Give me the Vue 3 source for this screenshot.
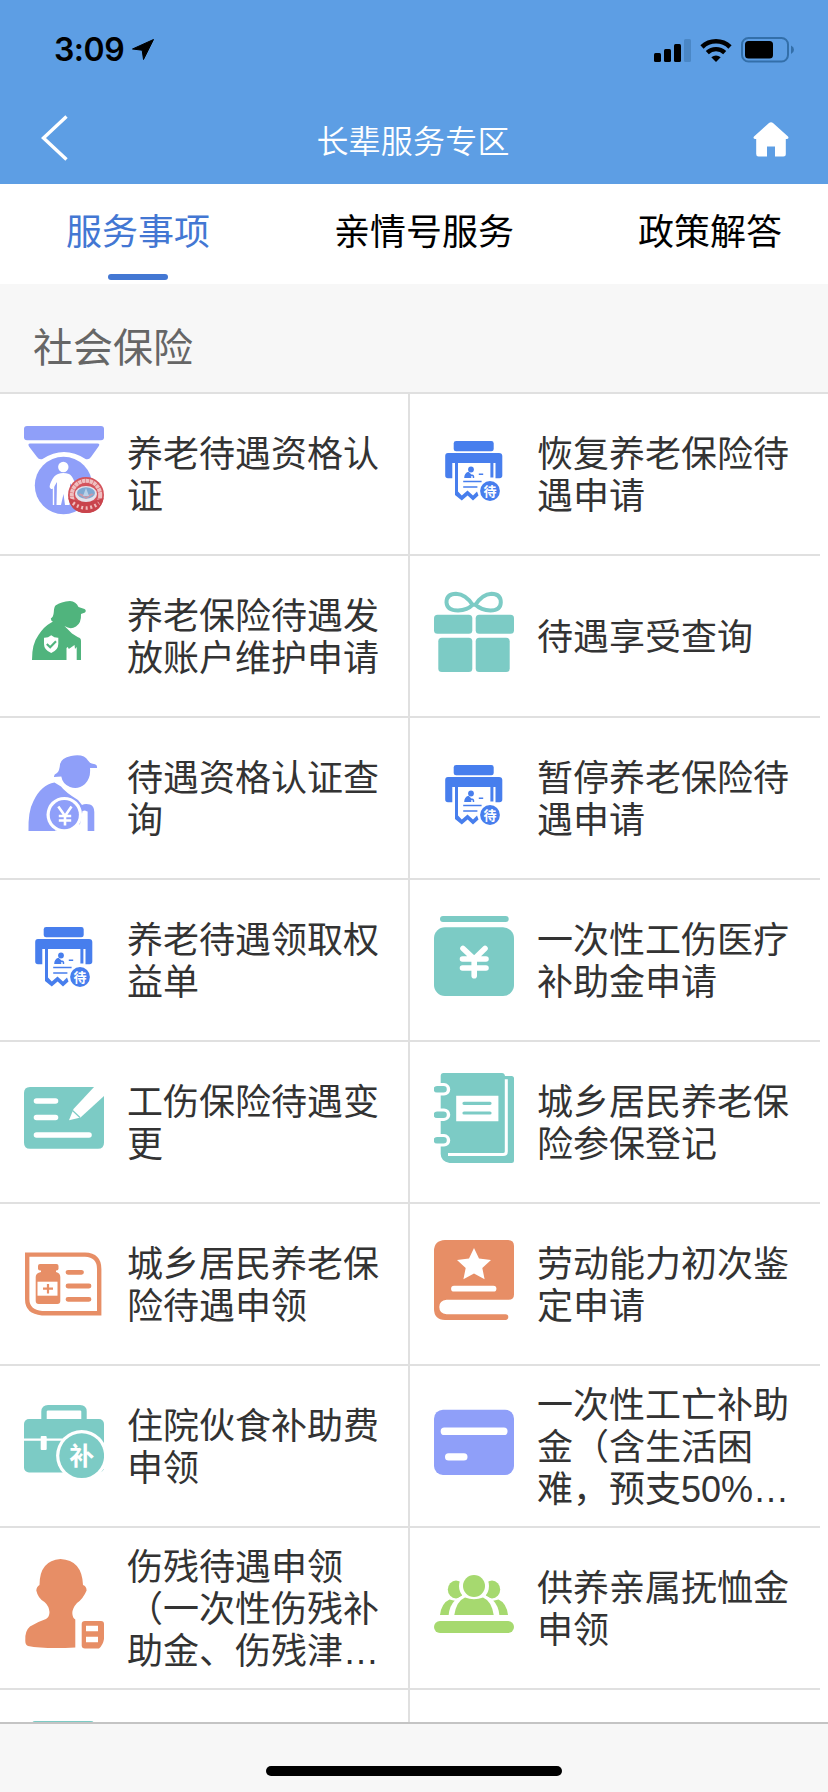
<template>
  <div class="page">
    <header class="header">
      <div class="status-bar">
        <div class="status-left">
          <span class="time">3:09</span>
          <svg class="location" viewBox="0 0 22 21">
            <path d="M21.5 0.5L11.5 20.5L10.2 11.2L0.5 10Z" fill="#000" stroke="#000" stroke-linejoin="round" />
          </svg>
        </div>
        <div class="status-right">
          <svg class="signal" viewBox="0 0 37 24">
            <rect x="0" y="15" width="7" height="9" rx="1.5" />
            <rect x="10" y="11" width="7" height="13" rx="1.5" />
            <rect x="20" y="6" width="7" height="18" rx="1.5" />
            <rect x="30" y="1" width="7" height="23" rx="1.5" fill="#4a87c6" />
          </svg>
          <svg class="wifi" viewBox="0 0 32 24">
            <path d="M2 9A20 20 0 0 1 30 9" fill="none" stroke="#000" stroke-width="4.6" />
            <path d="M7.3 14.6A12.6 12.6 0 0 1 24.7 14.6" fill="none" stroke="#000" stroke-width="4.4" />
            <path d="M11.3 19.2Q16 15.6 20.7 19.2L16 24Z" />
          </svg>
          <svg class="battery" viewBox="0 0 54 26">
            <rect x="1" y="1" width="46" height="23.5" rx="6.5" fill="none" stroke="#336fa9" stroke-width="2" />
            <rect x="4" y="4" width="28" height="17.5" rx="3.5" />
            <path d="M50 8.5Q53 10 53 12.8T50 17Z" fill="#336fa9" />
          </svg>
        </div>
      </div>
      <div class="nav-bar">
        <svg class="back" viewBox="0 0 28 46">
          <path d="M25.5 1.5L2.5 23L25.5 44.5" fill="none" stroke="#fff" stroke-width="3.4" />
        </svg>
        <h1>长辈服务专区</h1>
        <svg class="home" viewBox="0 0 36 35">
          <path d="M16 1Q18 -0.6 20 1L35 14.5Q36.4 16.6 34 17H32.8V32Q32.8 34.5 30.3 34.5H22V24.5H14V34.5H5.5Q3.2 34.5 3.2 32V17H2Q-0.4 16.6 1 14.5Z" fill="#fff" />
        </svg>
      </div>
    </header>

    <nav class="tabs">
      <div
        v-for="(tab, index) in tabs"
        :key="tab"
        class="tab"
        :class="{ active: index === activeTab }"
        @click="activeTab = index"
      >
        {{ tab }}
      </div>
    </nav>

    <h2 class="section-title">社会保险</h2>

    <main class="services">
      <div v-for="item in services" :key="item.title" class="service">
        <svg class="icon" viewBox="0 0 80 90">
          <!-- медаль -->
          <g v-if="item.icon === 'medal'" fill="#8f9ff9">
            <rect x="0" y="1" width="80" height="14.3" rx="3" />
            <path d="M6 18.5H73.5Q76.5 18.5 74.5 21.5L67 32Q65 35 61.5 34Q40 20 18.5 34Q15 35 13 32L5 21.5Q3.5 18.5 6 18.5Z" />
            <circle cx="39.5" cy="60.5" r="32" fill="#fff" />
            <circle cx="39.5" cy="60.5" r="28.7" />
            <circle cx="39.3" cy="42" r="5.2" fill="#fff" />
            <path d="M34 49Q39 47 45 49Q48 50 51 58L53 66H50L46 58V67L45.5 80H41L39.5 69L37 80H32.5L33 57L30 62Q29 65 26.5 63.5Q24.5 62 27 57Q30 50 34 49Z" fill="#fff" />
            <path d="M29.5 61V80" stroke="#fff" stroke-width="1.4" />
            <circle cx="62" cy="70" r="18" fill="#d4545c" />
            <circle cx="62" cy="70" r="14.2" fill="none" stroke="#efbfc0" stroke-width="4" stroke-dasharray="3.4 0.5" />
            <path d="M44.5 73Q62 80 79.5 73Q77 88 62 88T44.5 73Z" fill="#c9444c" />
            <path d="M49 78Q62 88 75 78" fill="none" stroke="#f0bcbc" stroke-width="3.5" stroke-dasharray="2 2.6" />
            <ellipse cx="62" cy="69" rx="11" ry="8" fill="#e6e3ea" />
            <ellipse cx="62" cy="68" rx="9" ry="5.8" fill="#7fa9d2" />
            <path d="M54 69Q58 67 62 72Q66 67 70 69L62 74Z" fill="#c99aab" />
            <path d="M62 63L65 71H59Z" fill="#b9d1e8" />
          </g>

          <!-- принтер -->
          <g v-else-if="item.icon === 'printer'" fill="#477eed">
            <rect x="19.7" y="16" width="40" height="10.3" rx="2.4" />
            <path d="M14 28H65Q68.3 28 68.3 31V50.5Q68.3 53.3 65.5 53.3H61.5V38H59.4V52.5H56.4V38H24V66.5L27.8 70.5L33.5 65.5L39 70.5L43 66.5L44.5 70.5L39 75.5L33.6 70.5L27.8 75.5L21 70V38H18.3V53.3H14Q11.2 53.3 11.2 50.5V31Q11.2 28 14 28Z" />
            <circle cx="37" cy="44.5" r="2.9" />
            <path d="M30.2 53Q30.2 48 34.5 46.8L37.5 49.5Q40.7 49 40.2 53H38.8L38.5 51L36.8 51.5L37.5 53Z" />
            <path d="M44.8 49.2H49.2M29.2 56.4H47.6M29.2 62H43.4" stroke="#477eed" stroke-width="1.5" />
            <circle cx="56" cy="66" r="9.9" />
            <text x="56" y="70.6" class="icon-text" font-size="13">待</text>
          </g>

          <!-- зелёная фигура со щитом -->
          <g v-else-if="item.icon === 'elder-shield'" fill="#50b47d">
            <path d="M31.5 18.5Q37 14.5 46 14Q52 14.5 54.5 20L60.5 22Q62.8 23.5 61 25.5L57 27Q57.5 36 52 39.5Q46.5 43 40.5 39L48 46.5L54 50.3Q57 51 57 54V73H52.7V60L51 62L50.5 58L44.8 62L43.8 60L42.5 61V73H8Q7.8 57 14.5 48Q20 39.5 26.5 36L29 34.5Q27 34 26.8 31.5Q29.5 30 29.8 25Q30 20 31.5 18.5Z" />
            <path d="M27.2 48.3Q30.5 51 34.3 50.8V57Q34.3 63 27.2 66Q20 63 20 57V50.8Q24 51 27.2 48.3Z" fill="#fff" />
            <path d="M22.8 57L26.2 60.2L32 54.2" fill="none" stroke="#50b47d" stroke-width="2.1" />
          </g>

          <!-- фигура с монетой -->
          <g v-else-if="item.icon === 'elder-coin'" fill="#8f9ff9">
            <path d="M36 15.5Q37 9 47 7Q60 4.5 64 11.5Q66 15 71 15.3Q73.5 16 73 19H66Q67 29 61 35Q54 41 46 38Q38.5 35 37.3 27.5L30 28Q29.5 25.5 33 24Q35.5 22 36 15.5Z" />
            <path d="M30.5 33.5L37 37.5Q41 43 54 51L58 56Q61 54.5 66 55.5Q70.3 57 70.3 63V82H63.4V63Q62 60.5 58.5 62L56 75L42 82H4.5Q4 62 9.5 52Q17 36 30.5 33.5Z" />
            <circle cx="40.3" cy="65.7" r="17.8" fill="#fff" />
            <path d="M58 83V67L63.4 62V83Z" fill="#fff" />
            <path d="M31 81.5H50V84H31Z" fill="#fff" />
            <circle cx="40.3" cy="65.7" r="14.6" />
            <path d="M34.3 57.5L41 67L47.5 57.5M41 67V76.5M34.8 67H47.2M34.8 71.5H47.2" fill="none" stroke="#fff" stroke-width="2.6" />
          </g>

          <!-- подарок -->
          <g v-else-if="item.icon === 'gift'" fill="#7ccbc5">
            <path d="M38.5 17.8Q32 7.5 22 6.8Q12.5 7 12.5 15.5Q13 23.5 24 23.5Q33.5 23 38.5 17.8H41.5Q48 7.5 57.5 6.8Q66.8 7 66.8 15.5Q66.5 23.5 56.5 23.5Q47 23 41.5 17.8" fill="none" stroke="#7ccbc5" stroke-width="4" />
            <rect x="0" y="27.7" width="38.3" height="19" rx="3.5" />
            <rect x="41.7" y="27.7" width="38.3" height="19" rx="3.5" />
            <rect x="4.3" y="50.7" width="34" height="34.3" rx="3.5" />
            <rect x="41.7" y="50.7" width="34" height="34.3" rx="3.5" />
          </g>

          <!-- кошелёк -->
          <g v-else-if="item.icon === 'money'" fill="#7ccbc5">
            <rect x="6" y="5" width="68.7" height="6" rx="3" />
            <rect x="0" y="16.3" width="80" height="68.7" rx="11" />
            <path d="M29 37.5L40.2 48L51 37.5M40.2 48V64.7M28.5 48H52M28.5 57H52" fill="none" stroke="#fff" stroke-width="5.6" stroke-linecap="round" stroke-linejoin="round" />
          </g>

          <!-- бланк с карандашом -->
          <g v-else-if="item.icon === 'edit'" fill="#7ccbc5">
            <path d="M6 14H70.5L80 22V69.7Q80 75.7 74 75.7H6Q0 75.7 0 69.7V20Q0 14 6 14Z" />
            <path d="M12.5 28H31.5M12.5 44.5H31.5M12.5 62H65" stroke="#fff" stroke-width="5.6" stroke-linecap="round" />
            <path d="M71 13L81 22L56.5 44.5L45 47.2L49.5 36Z" fill="#fff" />
            <path d="M48.5 37.5L56 44.5" stroke="#7ccbc5" stroke-width="1.2" />
          </g>

          <!-- блокнот -->
          <g v-else-if="item.icon === 'notebook'" fill="#7ccbc5">
            <path d="M9.5 0H68Q70.5 0 71 3H77.5Q80 3 80 5.5V87.5Q80 90 77.5 90H15.5Q6.7 88 6.7 81V3Q6.7 0 9.5 0Z" />
            <path d="M72.3 6.3V78.5Q72.3 81.6 69 81.6H14" fill="none" stroke="#fff" stroke-width="3" />
            <path d="M0 16.3H10M0 41.7H10M0 67.3H10" stroke="#fff" stroke-width="12.5" stroke-linecap="round" />
            <path d="M3 16.3H9.5M3 41.7H9.5M3 67.3H9.5" stroke="#7ccbc5" stroke-width="6.6" stroke-linecap="round" />
            <path d="M22.2 22.7H64.4V48.3H22.2Z" fill="#fff" />
            <path d="M30 30.3H56M30 40H56" stroke="#7ccbc5" stroke-width="3.2" stroke-linecap="round" />
          </g>

          <!-- медкарта -->
          <g v-else-if="item.icon === 'medicine'" fill="#e78e66">
            <path d="M3.2 19.6H61Q75.2 20 75.2 34V78.2H18Q3.2 77 3.2 64Z" fill="none" stroke="#e78e66" stroke-width="4.4" />
            <rect x="14" y="29" width="20.5" height="6.6" rx="2" />
            <path d="M17 35H32V37Q36.3 38 36.3 42V66Q36.3 69 33.3 69H14.7Q11.7 69 11.7 66V42Q11.7 38 17 37Z" />
            <rect x="13.5" y="46.7" width="20" height="14" fill="#fff" />
            <path d="M19 53.7H29M24 48.9V58.5" stroke="#e78e66" stroke-width="2.2" />
            <path d="M44 37.3H57.5M44 51H65M44 64.3H65" stroke="#e78e66" stroke-width="4.8" stroke-linecap="round" />
          </g>

          <!-- книга со звездой -->
          <g v-else-if="item.icon === 'star-book'" fill="#e78e66">
            <path d="M11 5H74Q80 5 80 11V59.5Q80 64.8 74.5 64.8H12.5Q5.3 65.5 5.3 72T12.5 79.3H71.5Q74.3 79.3 74.3 82T71.5 85H11Q0 84.5 0 74V16Q0 5.5 11 5Z" />
            <path d="M40 13L45 23.6L57 25L48.3 33L50.6 44.3L40 38.5L29.4 44.3L31.7 33L23 25L35 23.6Z" fill="#fff" />
            <path d="M20 53.7H59.5" stroke="#fff" stroke-width="5.8" stroke-linecap="round" />
          </g>

          <!-- портфель -->
          <g v-else-if="item.icon === 'briefcase'" fill="#7ccbc5">
            <path d="M20 24V14.5Q20 10.7 24 10.7H56Q60 10.7 60 14.5V24" fill="none" stroke="#7ccbc5" stroke-width="5.4" />
            <rect x="0" y="22" width="80" height="53.5" rx="5" />
            <path d="M0 42.7H44" stroke="#fff" stroke-width="2.2" />
            <rect x="16.7" y="39" width="6" height="14" rx="1" fill="#fff" />
            <circle cx="57.7" cy="58.7" r="25.6" fill="#fff" />
            <circle cx="57.7" cy="58.7" r="22.4" />
            <text x="57.7" y="68" class="icon-text" font-size="25">补</text>
          </g>

          <!-- карта -->
          <g v-else-if="item.icon === 'card'" fill="#8f9ff9">
            <rect x="0" y="12.7" width="80" height="65.3" rx="9" />
            <rect x="6.7" y="30.4" width="66.8" height="7.6" rx="3.6" fill="#fff" />
            <rect x="11" y="56.2" width="22.5" height="7.4" rx="3.6" fill="#fff" />
          </g>

          <!-- бюст -->
          <g v-else-if="item.icon === 'bust'" fill="#e78e66">
            <path d="M36.5 0Q58 1 59 26Q62.5 27 62.6 31.5Q59 40 53 44Q48.5 49 48.3 54Q48.5 59 51.3 60.5V88.5Q20 90 4 87Q1.3 86 1.3 82Q0.5 72 6 67.5Q13 63 22 60Q25.5 58 25.5 53Q25 47 20.5 43Q14 39.5 12.3 31.5Q12.5 27.5 15.5 26Q15.5 1.5 36.5 0Z" />
            <path d="M61 62H77Q80 62 80 65V80Q79 86 75 89.5H61Q57.7 89.5 57.7 86.5V65Q57.7 62 61 62ZM62 66.7V72.3H74V66.7ZM62 77.7V83.3H74V77.7Z" fill-rule="evenodd" />
          </g>

          <!-- люди -->
          <g v-else-if="item.icon === 'people'" fill="#a6d96f">
            <ellipse cx="22" cy="30.5" rx="8.2" ry="9" />
            <ellipse cx="58" cy="30.5" rx="8.2" ry="9" />
            <path d="M6 56Q7.5 44 15.5 40.5L30 44V56ZM74 56Q72.5 44 64.5 40.5L50 44V56Z" />
            <circle cx="40" cy="27" r="15" fill="#fff" />
            <path d="M14.5 57Q16 36 40 34Q64 36 65.5 57Z" fill="#fff" />
            <circle cx="40" cy="27" r="11" />
            <path d="M20.3 56Q22.5 42 31 38.5Q40 42 49 38.5Q57.5 42 59.7 56Z" />
            <rect x="0" y="62" width="80" height="12" rx="6" />
          </g>

          <!-- папка -->
          <g v-else fill="#7ccbc5">
            <rect x="8" y="0" width="62" height="90" rx="3" />
          </g>
        </svg>
        <span class="title">{{ item.title }}</span>
      </div>
    </main>

    <footer class="bottom-bar">
      <div class="home-indicator"></div>
    </footer>
  </div>
</template>

<script setup>
import { ref } from 'vue';

const tabs = ['服务事项', '亲情号服务', '政策解答'];
const activeTab = ref(0);

const services = [
  { icon: 'medal', title: '养老待遇资格认证' },
  { icon: 'printer', title: '恢复养老保险待遇申请' },
  { icon: 'elder-shield', title: '养老保险待遇发放账户维护申请' },
  { icon: 'gift', title: '待遇享受查询' },
  { icon: 'elder-coin', title: '待遇资格认证查询' },
  { icon: 'printer', title: '暂停养老保险待遇申请' },
  { icon: 'printer', title: '养老待遇领取权益单' },
  { icon: 'money', title: '一次性工伤医疗补助金申请' },
  { icon: 'edit', title: '工伤保险待遇变更' },
  { icon: 'notebook', title: '城乡居民养老保险参保登记' },
  { icon: 'medicine', title: '城乡居民养老保险待遇申领' },
  { icon: 'star-book', title: '劳动能力初次鉴定申请' },
  { icon: 'briefcase', title: '住院伙食补助费申领' },
  { icon: 'card', title: '一次性工亡补助金（含生活困难，预支50%…' },
  { icon: 'bust', title: '伤残待遇申领（一次性伤残补助金、伤残津…' },
  { icon: 'people', title: '供养亲属抚恤金申领' },
  { icon: 'folder', title: '' },
];
</script>

<style>
body {
  margin: 0;
}
</style>

<style scoped>
.page {
  display: flex;
  flex-direction: column;
  width: 828px;
  height: 1792px;
  overflow: hidden;
  background: #fff;
  color: #333;
  font-family: "Liberation Sans", "Noto Sans CJK SC", sans-serif;
}

.header {
  flex: none;
  height: 184px;
  background: #5d9ee4;
}

.status-bar {
  display: flex;
  justify-content: space-between;
  align-items: center;
  height: 99px;
  padding: 0 33px 0 54px;
}

.status-left,
.status-right {
  display: flex;
  align-items: center;
}

.status-left {
  gap: 8px;
}

.status-right {
  gap: 9px;
}

.time {
  color: #000;
  font-family: Inter, "Liberation Sans", sans-serif;
  font-size: 32px;
  font-weight: 600;
  letter-spacing: -0.5px;
}

.location {
  width: 22px;
  height: 21px;
}

.signal {
  width: 37px;
  height: 24px;
}

.wifi {
  width: 32px;
  height: 24px;
}

.battery {
  width: 54px;
  height: 26px;
}

.nav-bar {
  display: flex;
  justify-content: space-between;
  align-items: center;
  height: 78px;
  padding: 0 39px 0 41px;
}

.nav-bar h1 {
  margin: 2px 0 0 4px;
  color: #fff;
  font-size: 32px;
  font-weight: 350;
  letter-spacing: 0.2px;
}

.back {
  width: 28px;
  height: 46px;
}

.home {
  width: 36px;
  height: 35px;
  margin-top: 2px;
}

.tabs {
  display: flex;
  flex: none;
  gap: 124px;
  height: 100px;
  padding-left: 66px;
}

.tab {
  display: flex;
  flex-direction: column;
  align-items: center;
  color: #000;
  font-size: 36px;
  line-height: 98px;
}

.tab.active {
  color: #4377d3;
}

.tab.active::after {
  content: "";
  width: 60px;
  height: 6px;
  margin-top: -8px;
  border-radius: 3px;
  background: #4377d3;
}

.section-title {
  flex: none;
  height: 108px;
  margin: 0;
  padding-left: 33px;
  border-bottom: 2px solid #e0e0e0;
  background: #f7f7f7;
  color: #666;
  font-size: 40px;
  font-weight: 400;
  line-height: 128px;
}

.services {
  display: grid;
  flex: 1;
  grid-template-columns: 410px 410px;
  grid-auto-rows: 162px;
  min-height: 0;
  overflow: hidden;
}

.service {
  display: flex;
  align-items: center;
  box-sizing: border-box;
  padding-left: 24px;
  border-bottom: 2px solid #e0e0e0;
}

.service:nth-child(odd) {
  border-right: 2px solid #e0e0e0;
}

.icon {
  flex: none;
  width: 80px;
  height: 90px;
  margin: 0 23px 8px 0;
}

.icon-text {
  fill: #fff;
  font-family: "Noto Sans CJK SC", sans-serif;
  font-weight: 700;
  text-anchor: middle;
}

.title {
  width: 254px;
  padding-top: 4px;
  font-size: 36px;
  line-height: 42.3px;
}

.bottom-bar {
  display: flex;
  flex: none;
  justify-content: center;
  align-items: flex-start;
  box-sizing: border-box;
  height: 70px;
  padding-top: 42px;
  border-top: 2px solid #c4c4c4;
  background: #f7f7f7;
}

.home-indicator {
  width: 296px;
  height: 10px;
  border-radius: 5px;
  background: #000;
}
</style>
